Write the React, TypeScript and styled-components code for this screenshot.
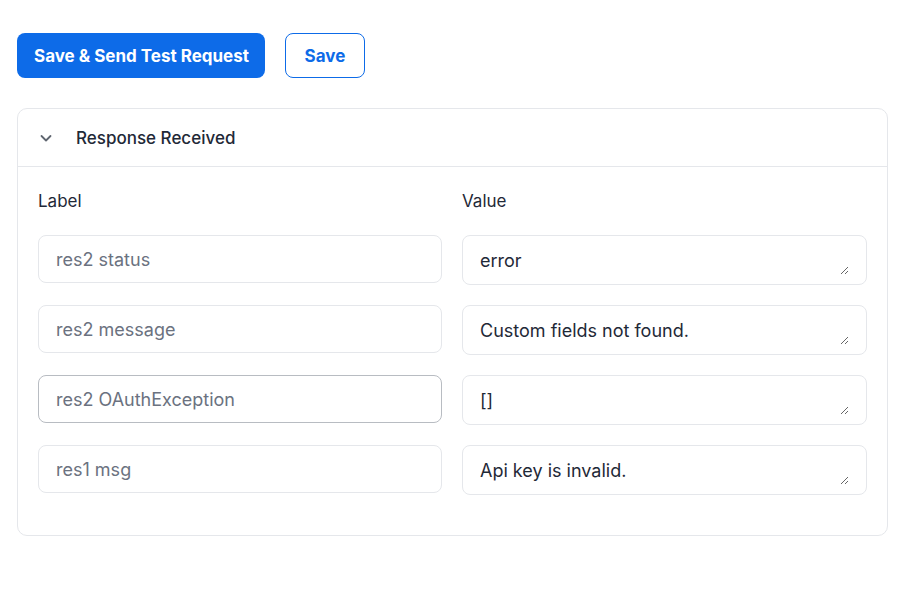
import React from "react";
import styled, { createGlobalStyle } from "styled-components";

const GlobalStyle = createGlobalStyle`
	body {
		margin: 0;
		background: #ffffff;
		font-family: "Inter", "Noto Sans", sans-serif;
		color: #1f2937;
	}
`;

const rows = [
	{ label: "res2 status", value: "error" },
	{ label: "res2 message", value: "Custom fields not found." },
	{ label: "res2 OAuthException", value: "[]", active: true },
	{ label: "res1 msg", value: "Api key is invalid." },
];

const ChevronDown = () => (
	<svg width="16" height="16" viewBox="0 0 16 16" fill="none">
		<path
			d="M3.5 6 L8 10.5 L12.5 6"
			stroke="#5f6670"
			strokeWidth="1.8"
			strokeLinecap="round"
			strokeLinejoin="round"
		/>
	</svg>
);

const App = () => {
	return (
		<>
			<GlobalStyle />
			<Page>
				<ButtonRow>
					<PrimaryButton>Save &amp; Send Test Request</PrimaryButton>
					<OutlineButton>Save</OutlineButton>
				</ButtonRow>
				<Card>
					<CardHeader>
						<ChevronDown />
						<CardTitle>Response Received</CardTitle>
					</CardHeader>
					<CardBody>
						<ColumnLabel>Label</ColumnLabel>
						<ColumnLabel>Value</ColumnLabel>
						{rows.map((row) => (
							<React.Fragment key={row.label}>
								<LabelInput placeholder={row.label} $active={row.active} readOnly />
								<ValueBox>
									<ValueArea defaultValue={row.value} rows={1} />
								</ValueBox>
							</React.Fragment>
						))}
					</CardBody>
				</Card>
			</Page>
		</>
	);
};

export default App;

const Page = styled.div`
	padding: 33px 13px 0 17px;
`;

const ButtonRow = styled.div`
	display: flex;
	gap: 20px;
`;

const PrimaryButton = styled.button`
	background: #0d6be8;
	color: #ffffff;
	font-family: "Inter", sans-serif;
	font-size: 17px;
	font-weight: 700;
	height: 45px;
	padding: 0 16px 0 17px;
	border: none;
	border-radius: 8px;
	cursor: pointer;
`;

const OutlineButton = styled.button`
	background: #ffffff;
	color: #0d6be8;
	font-family: "Inter", sans-serif;
	font-size: 17px;
	font-weight: 700;
	height: 45px;
	width: 80px;
	border: 1px solid #0d6be8;
	border-radius: 8px;
	cursor: pointer;
`;

const Card = styled.section`
	margin-top: 30px;
	border: 1px solid #e5e7eb;
	border-radius: 10px;
	width: 869px;
`;

const CardHeader = styled.div`
	display: flex;
	align-items: center;
	gap: 22px;
	height: 57px;
	padding: 0 20px;
	border-bottom: 1px solid #e5e7eb;
`;

const CardTitle = styled.span`
	font-size: 17px;
	font-weight: 500;
	color: #1f2937;
`;

const CardBody = styled.div`
	display: grid;
	grid-template-columns: 404px 405px;
	column-gap: 20px;
	row-gap: 20px;
	padding: 24px 20px 40px 20px;
`;

const ColumnLabel = styled.div`
	font-size: 17px;
	color: #1f2937;
	line-height: 20px;
	margin-bottom: 4px;
`;

const LabelInput = styled.input<{ $active?: boolean }>`
	box-sizing: border-box;
	height: 48px;
	padding: 0 17px;
	border: 1px solid ${(p) => (p.$active ? "#b8bcc2" : "#e5e7eb")};
	border-radius: 8px;
	font-family: "Inter", sans-serif;
	font-size: 18px;
	color: #1f2937;
	outline: none;
	&::placeholder {
		color: #6b7280;
	}
`;

const ValueBox = styled.div`
	box-sizing: border-box;
	height: 50px;
	padding: 13px 17px 0 17px;
	border: 1px solid #e5e7eb;
	border-radius: 8px;
	display: flex;
`;

const ValueArea = styled.textarea`
	flex: 1;
	height: 26px;
	padding: 0;
	border: none;
	font-family: "Inter", sans-serif;
	font-size: 18px;
	line-height: 24px;
	color: #1f2937;
	outline: none;
	resize: vertical;
	background: transparent;
`;
